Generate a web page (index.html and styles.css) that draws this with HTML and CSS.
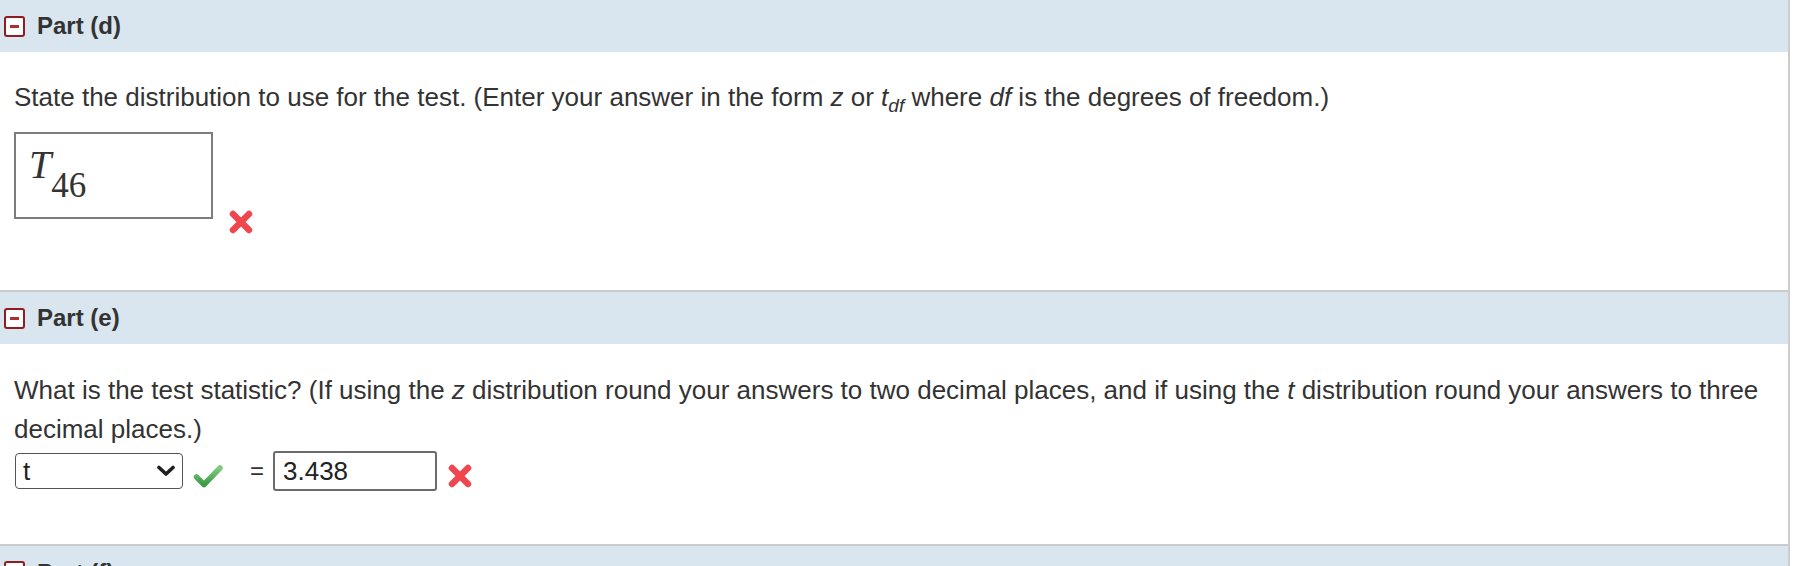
FILE: index.html
```html
<!DOCTYPE html>
<html lang="en">
<head>
<meta charset="utf-8">
<title>Parts</title>
<link rel="stylesheet" href="styles.css">
</head>
<body>
<div class="parts">
  <section class="part">
    <header class="part-head"><span class="toggle"></span><span class="part-title">Part (d)</span></header>
    <div class="part-body part-body--d">
      <p class="question question--single">State the distribution to use for the test. (Enter your answer in the form <i>z</i> or <i>t</i><sub class="sub-df"><i>df</i></sub> where <i>df</i> is the degrees of freedom.)</p>
      <div class="answer-row answer-row--math">
        <div class="math-box"><span class="math-t">T</span><span class="math-sub">46</span></div>
        <svg class="icon-x icon-x--math" viewBox="0 0 28 28" width="28" height="28"><path d="M6 6 L22 22 M22 6 L6 22" stroke="#f0474f" stroke-width="6.5" stroke-linecap="round" fill="none"/></svg>
      </div>
    </div>
  </section>
  <section class="part">
    <header class="part-head"><span class="toggle"></span><span class="part-title">Part (e)</span></header>
    <div class="part-body part-body--e">
      <p class="question">What is the test statistic? (If using the <i>z</i> distribution round your answers to two decimal places, and if using the <i>t</i> distribution round your answers to three decimal places.)</p>
      <div class="answer-row answer-row--stat">
        <div class="select"><span class="select-value">t</span><svg class="chevron" viewBox="0 0 20 12" width="20" height="12"><path d="M3 2.5 L10 9 L17 2.5" stroke="#1e1e1e" stroke-width="3.6" fill="none" stroke-linecap="round" stroke-linejoin="round"/></svg></div>
        <svg class="icon-check" viewBox="0 0 30 24" width="30" height="24"><defs><linearGradient id="g" x1="0" y1="0" x2="0" y2="1"><stop offset="0" stop-color="#7fcb7f"/><stop offset="1" stop-color="#3e9a43"/></linearGradient></defs><path d="M3.5 13 L11 20.5 L27 4" stroke="url(#g)" stroke-width="5.5" fill="none" stroke-linecap="round" stroke-linejoin="round"/></svg>
        <span class="equals">=</span>
        <div class="text-input">3.438</div>
        <svg class="icon-x" viewBox="0 0 28 28" width="28" height="28"><path d="M6 6 L22 22 M22 6 L6 22" stroke="#f0474f" stroke-width="6.5" stroke-linecap="round" fill="none"/></svg>
      </div>
    </div>
  </section>
  <section class="part">
    <header class="part-head part-head--f"><span class="toggle"></span><span class="part-title">Part (f)</span></header>
  </section>
</div>
</body>
</html>
```

FILE: styles.css
```css
html, body {
  margin: 0;
  padding: 0;
  overflow: hidden;
  background: #fff;
}

body {
  font-family: "Liberation Sans", Arial, Helvetica, sans-serif;
  color: #333;
}

.parts {
  width: 1788px;
  border-right: 2px solid #cccccc;
}

.part + .part {
  border-top: 2px solid #cccccc;
}

.part-head {
  height: 52px;
  background: #d9e5ef;
  display: flex;
  align-items: center;
  padding-left: 4px;
  gap: 12px;
}

.part-head--f {
  height: 60px;
  align-items: flex-start;
  padding-top: 15px;
  box-sizing: border-box;
}

.toggle {
  width: 21px;
  height: 21px;
  box-sizing: border-box;
  border: 2px solid #8f1d1f;
  border-radius: 3px;
  background: #fff;
  display: flex;
  align-items: center;
  justify-content: center;
  flex: none;
}

.toggle::before {
  content: "";
  width: 9px;
  height: 3px;
  background: #a83134;
}

.part-title {
  font-weight: bold;
  font-size: 24px;
  color: #333;
}

.part-head--f .part-title {
  line-height: 24px;
}

.part-body {
  padding-left: 14px;
}

.part-body--d {
  padding-top: 25px;
  padding-bottom: 54px;
}

.part-body--e {
  padding-top: 27px;
  padding-bottom: 53px;
}

.question {
  margin: 0;
  font-size: 26px;
  line-height: 39px;
}

.question--single {
  line-height: 40px;
}

.sub-df {
  font-size: 19px;
  vertical-align: -6px;
  line-height: 0;
}

.answer-row {
  display: flex;
}

.answer-row--math {
  margin-top: 15px;
  align-items: flex-start;
}

.math-box {
  width: 199px;
  height: 87px;
  box-sizing: border-box;
  border: 2px solid #7d7d7d;
  padding: 11px 0 0 13px;
  font-family: "Liberation Serif", "Times New Roman", serif;
  font-size: 40px;
  line-height: 40px;
  color: #333;
}

.math-t {
  font-style: italic;
}

.math-sub {
  font-size: 35px;
  vertical-align: -19px;
}

.icon-x--math {
  margin-left: 14px;
  margin-top: 76px;
}

.answer-row--stat {
  margin-top: 2px;
  align-items: center;
}

.select {
  margin-left: 1px;
  width: 168px;
  height: 36px;
  box-sizing: border-box;
  border: 1.5px solid #555;
  border-radius: 4px;
  display: flex;
  align-items: center;
  justify-content: space-between;
  padding: 0 6px 0 7px;
  font-size: 26px;
  color: #222;
}

.chevron {
  display: block;
}

.icon-check {
  margin-left: 10px;
  margin-top: 9px;
}

.equals {
  margin-left: 27px;
  font-size: 24px;
  color: #333;
}

.text-input {
  margin-left: 9px;
  width: 164px;
  height: 40px;
  box-sizing: border-box;
  border: 2px solid #6b6b6b;
  border-radius: 3px;
  display: flex;
  align-items: center;
  padding-left: 8px;
  font-size: 26px;
  color: #222;
}

.answer-row--stat .icon-x {
  margin-left: 9px;
  margin-top: 9px;
}
```
